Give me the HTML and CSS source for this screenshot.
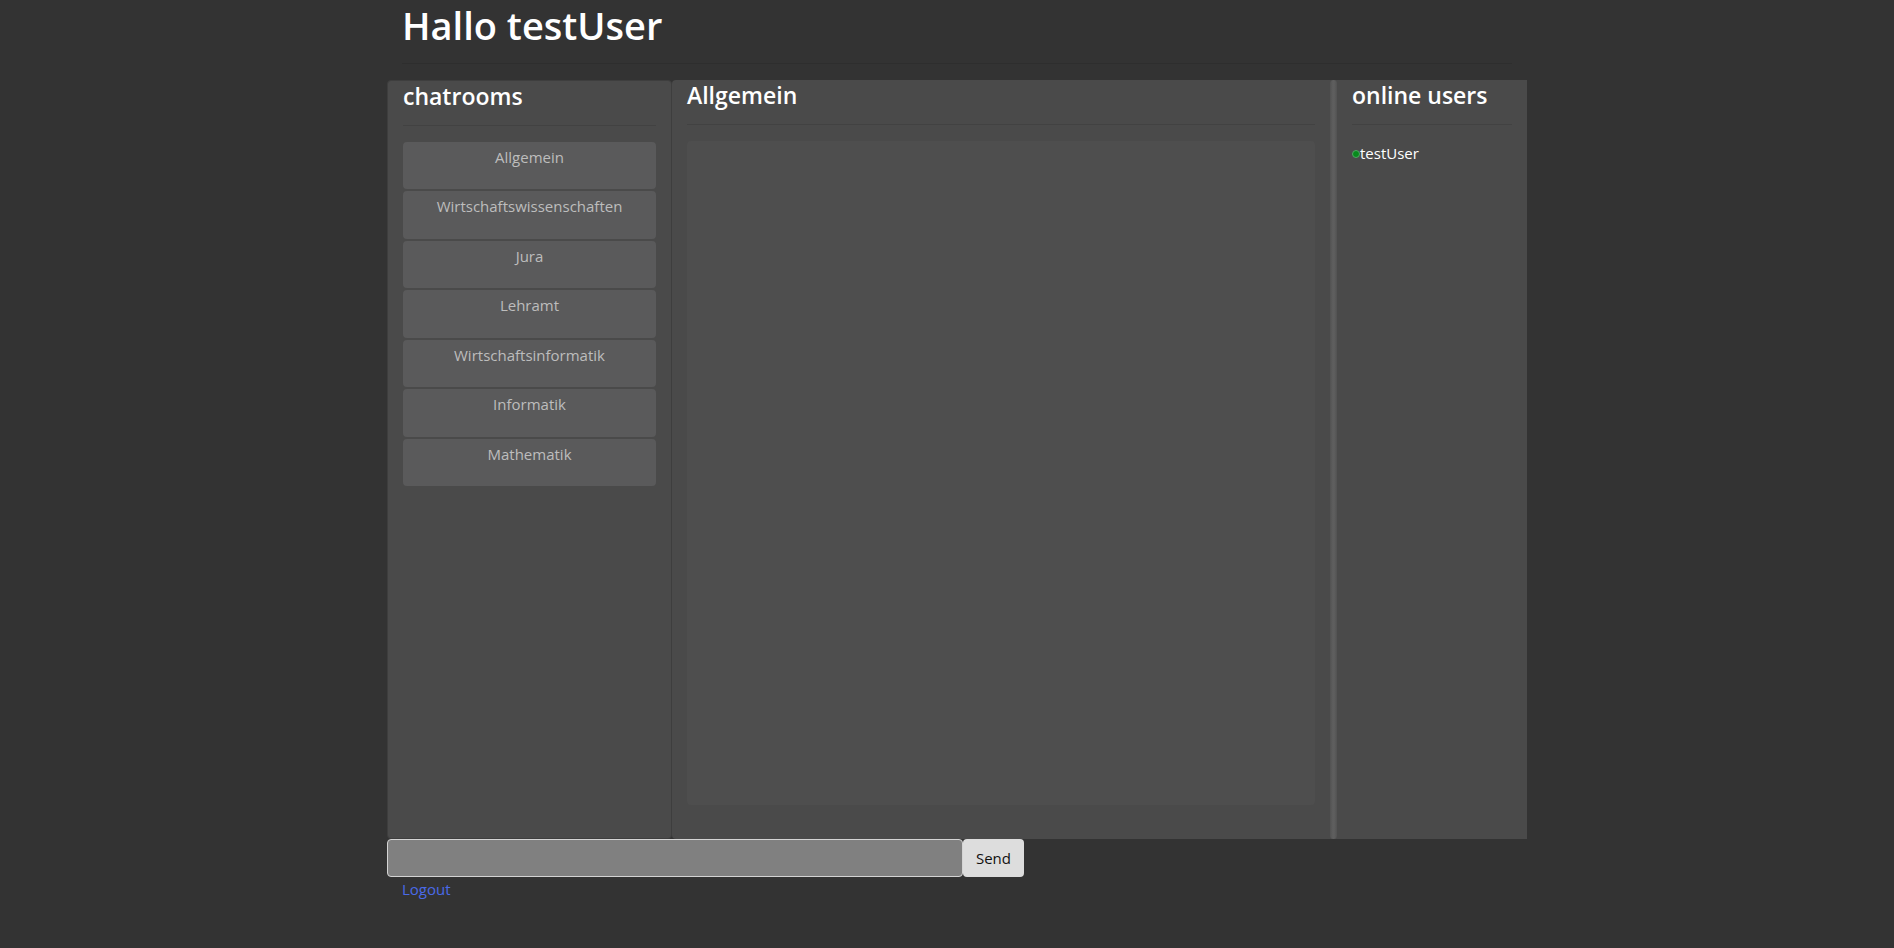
FILE: index.html
```html
<!DOCTYPE html>
<html lang="de">
<head>
<meta charset="utf-8">
<title>Chat</title>
<link rel="stylesheet" href="styles.css">
</head>
<body>
<div class="container">
  <header class="header">
    <h1>Hallo testUser</h1>
    <hr class="rule">
  </header>
  <main class="row">
    <nav class="rooms">
      <h2>chatrooms</h2>
      <hr class="rule">
      <div class="room-list">
        <button class="room" type="button">Allgemein</button>
        <button class="room" type="button">Wirtschaftswissenschaften</button>
        <button class="room" type="button">Jura</button>
        <button class="room" type="button">Lehramt</button>
        <button class="room" type="button">Wirtschaftsinformatik</button>
        <button class="room" type="button">Informatik</button>
        <button class="room" type="button">Mathematik</button>
      </div>
    </nav>
    <section class="chat">
      <div class="chat-body">
        <h2>Allgemein</h2>
        <hr class="rule">
        <div class="messages"></div>
      </div>
      <div class="scroll-track"></div>
    </section>
    <aside class="users">
      <h2>online users</h2>
      <hr class="rule">
      <div class="user"><span class="status"></span>testUser</div>
    </aside>
  </main>
  <form class="compose">
    <input class="message-input" type="text" aria-label="Nachricht">
    <button class="send" type="submit">Send</button>
  </form>
  <a class="logout" href="#">Logout</a>
</div>
</body>
</html>
```
FILE: styles.css
```css
* {
  box-sizing: border-box;
}

body {
  margin: 0;
  background: #333333;
  color: #ffffff;
  font-family: "Segoe UI", "Open Sans", sans-serif;
  font-size: 15px;
  line-height: 24px;
}

.container {
  max-width: 1160px;
  margin: 0 auto;
  padding-left: 20px;
}

h1,
h2 {
  margin: 0;
  font-weight: 600;
}

h1 {
  padding-top: 1px;
  font-size: 38px;
  line-height: 48px;
}

h2 {
  padding-top: 1px;
  font-size: 23px;
  line-height: 28px;
}

.rule {
  height: 1px;
  margin: 15px 0 16px;
  border: 0;
  background: #424242;
}

.header {
  padding: 0 15px;
}

.header .rule {
  margin: 14px 0 16px;
  background: #2e2e2e;
}

.row {
  display: grid;
  grid-template-columns: 3fr 7fr 2fr;
  min-height: 759px;
}

.rooms,
.chat,
.users {
  background: #4a4a4a;
}

.rooms,
.users {
  padding: 0 15px;
}

.rooms {
  border: 1px solid #3e3e3e;
  border-radius: 4px;
}

.chat {
  display: flex;
  border-radius: 4px 0 0 4px;
}

.chat-body {
  flex: 1;
  display: flex;
  flex-direction: column;
  padding: 0 15px;
}

.scroll-track {
  width: 7px;
  border-radius: 4px;
  background: linear-gradient(to right, #525252, #5e5e5e 40%, #5e5e5e 60%, #525252);
}

.room-list {
  display: grid;
  grid-auto-rows: 1fr;
  gap: 2px;
  height: 344px;
}

.room {
  display: flex;
  justify-content: center;
  align-items: flex-start;
  padding: 3px 8px;
  border: 0;
  border-radius: 4px;
  background: #5a5a5b;
  color: #bdbdbd;
  font: inherit;
}

.messages {
  flex: 1;
  margin-bottom: 34px;
  border-radius: 4px;
  background: #4e4e4e;
}

.user {
  display: flex;
  align-items: center;
}

.status {
  width: 8px;
  height: 8px;
  margin-top: 1px;
  border: 1px solid #4fa564;
  border-radius: 50%;
  background: #078a1c;
}

.compose {
  display: flex;
  width: 56%;
  max-width: 637px;
}

.message-input {
  flex: 1;
  min-width: 0;
  height: 38px;
  padding: 6px 12px;
  border: 1px solid #d4d4d4;
  border-radius: 4px;
  background: #808080;
  color: #ffffff;
  font: inherit;
}

.send {
  padding: 6px 13px;
  border: 0;
  border-radius: 4px;
  background: #dddddd;
  color: #111111;
  font: inherit;
}

.logout {
  display: inline-block;
  margin-left: 15px;
  color: #4a6ae8;
  text-decoration: none;
}
```
